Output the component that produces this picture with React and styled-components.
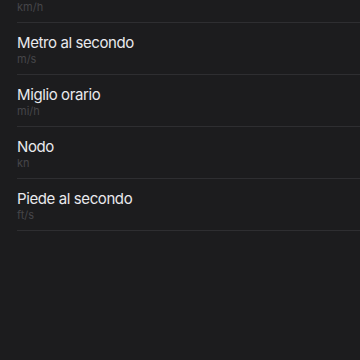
import React from "react";
import styled, { createGlobalStyle } from "styled-components";

const GlobalStyle = createGlobalStyle`
  html, body {
    margin: 0;
    padding: 0;
    background: #1c1c1e;
  }
  body {
    font-family: Inter, "Liberation Sans", sans-serif;
    -webkit-font-smoothing: antialiased;
  }
`;

const units = [
  { name: "Chilometro orario", symbol: "km/h" },
  { name: "Metro al secondo", symbol: "m/s" },
  { name: "Miglio orario", symbol: "mi/h" },
  { name: "Nodo", symbol: "kn" },
  { name: "Piede al secondo", symbol: "ft/s" },
];

function UnitList() {
  return (
    <Viewport>
      <List>
        {units.map((u) => (
          <Row key={u.symbol}>
            <Title>{u.name}</Title>
            <Symbol>{u.symbol}</Symbol>
          </Row>
        ))}
      </List>
    </Viewport>
  );
}

export default function App() {
  return (
    <>
      <GlobalStyle />
      <UnitList />
    </>
  );
}

const Viewport = styled.div`
  width: 360px;
  height: 360px;
  overflow: hidden;
  background: #1c1c1e;
`;

// list is scrolled up a little, so the first row is partly hidden
const List = styled.ul`
  list-style: none;
  margin: -29px 0 0 0;
  padding: 0;
`;

const Row = styled.li`
  display: flex;
  flex-direction: column;
  gap: 1px;
  margin-left: 17px;
  padding: 11px 0 9px 0;
  border-bottom: 1px solid #2e2e31;
`;

const Title = styled.div`
  font-size: 15px;
  line-height: 18px;
  color: #e9e9ed;
  letter-spacing: -0.4px;
`;

const Symbol = styled.div`
  font-size: 11px;
  line-height: 12px;
  color: #454549;
`;
